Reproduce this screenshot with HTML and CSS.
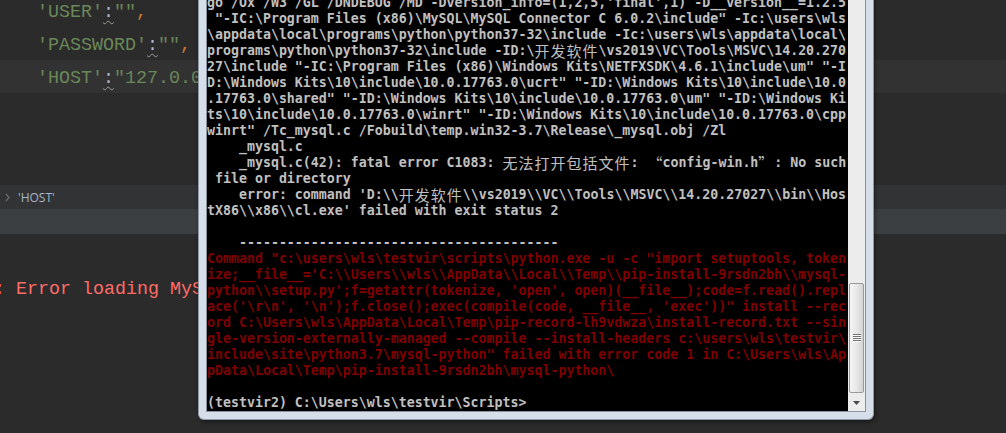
FILE: index.html
```html
<!DOCTYPE html>
<html lang="zh-CN">
<head>
  <meta charset="UTF-8" />
  <title>pip install mysql-python</title>
  <link rel="stylesheet" href="styles.css">
</head>
<body>
<div class="ide">
  <div class="editor">
    <div class="code">
      <div class="row">'USER'<span class="warn">:</span>""<span class="comma">,</span></div>
      <div class="row">'PASSWORD'<span class="warn">:</span>""<span class="comma">,</span></div>
      <div class="row current">'HOST'<span class="warn">:</span>"127.0.0.1"<span class="comma">,</span></div>
    </div>
  </div>
  <div class="crumbs">
    <svg width="5" height="9" viewBox="0 0 5 9"><polyline points="1,1 4,4.5 1,8" fill="none" stroke="#6b6e70" stroke-width="1.2"/></svg>
    <span>'HOST'</span>
  </div>
  <div class="toolhead"></div>
  <div class="output">: Error loading MySQLdb module.</div>
</div>

<!-- console window, lies over the editor -->
<div class="window">
  <div class="console">
    <div class="screen">
      <div class="ln">go /Ox /W3 /GL /DNDEBUG /MD -Dversion_info=(1,2,5,'final',1) -D__version__=1.2.5</div>
      <div class="ln"> "-IC:\Program Files (x86)\MySQL\MySQL Connector C 6.0.2\include" -Ic:\users\wls</div>
      <div class="ln">\appdata\local\programs\python\python37-32\include -Ic:\users\wls\appdata\local\</div>
      <div class="ln">programs\python\python37-32\include -ID:\<span class="cjk">开发软件</span>\vs2019\VC\Tools\MSVC\14.20.270</div>
      <div class="ln">27\include "-IC:\Program Files (x86)\Windows Kits\NETFXSDK\4.6.1\include\um" "-I</div>
      <div class="ln">D:\Windows Kits\10\include\10.0.17763.0\ucrt" "-ID:\Windows Kits\10\include\10.0</div>
      <div class="ln">.17763.0\shared" "-ID:\Windows Kits\10\include\10.0.17763.0\um" "-ID:\Windows Ki</div>
      <div class="ln">ts\10\include\10.0.17763.0\winrt" "-ID:\Windows Kits\10\include\10.0.17763.0\cpp</div>
      <div class="ln">winrt" /Tc_mysql.c /Fobuild\temp.win32-3.7\Release\_mysql.obj /Zl</div>
      <div class="ln">    _mysql.c</div>
      <div class="ln">    _mysql.c(42): fatal error C1083: <span class="cjk">无法打开包括文件</span>: <span class="wq l">“</span>config-win.h<span class="wq r">”</span>: No such</div>
      <div class="ln"> file or directory</div>
      <div class="ln">    error: command 'D:\\<span class="cjk">开发软件</span>\\vs2019\\VC\\Tools\\MSVC\\14.20.27027\\bin\\Hos</div>
      <div class="ln">tX86\\x86\\cl.exe' failed with exit status 2</div>
      <div class="ln"></div>
      <div class="ln">    ----------------------------------------</div>
      <div class="ln red">Command "c:\users\wls\testvir\scripts\python.exe -u -c "import setuptools, token</div>
      <div class="ln red">ize;__file__='C:\\Users\\wls\\AppData\\Local\\Temp\\pip-install-9rsdn2bh\\mysql-</div>
      <div class="ln red">python\\setup.py';f=getattr(tokenize, 'open', open)(__file__);code=f.read().repl</div>
      <div class="ln red">ace('\r\n', '\n');f.close();exec(compile(code, __file__, 'exec'))" install --rec</div>
      <div class="ln red">ord C:\Users\wls\AppData\Local\Temp\pip-record-lh9vdwza\install-record.txt --sin</div>
      <div class="ln red">gle-version-externally-managed --compile --install-headers c:\users\wls\testvir\</div>
      <div class="ln red">include\site\python3.7\mysql-python" failed with error code 1 in C:\Users\wls\Ap</div>
      <div class="ln red">pData\Local\Temp\pip-install-9rsdn2bh\mysql-python\</div>
      <div class="ln"></div>
      <div class="ln">(testvir2) C:\Users\wls\testvir\Scripts&gt;</div>
    </div>
    <div class="scroll">
      <div class="thumb">
        <svg width="8" height="9" viewBox="0 0 8 9">
          <path d="M0 0.5h8M0 2.5h8M0 4.5h8M0 6.5h8" stroke="#6f6f6f" stroke-width="1"/>
          <path d="M0 1.5h8M0 3.5h8M0 5.5h8M0 7.5h8" stroke="#ffffff" stroke-width="1"/>
        </svg>
      </div>
      <div class="arrow">
        <svg width="7" height="4" viewBox="0 0 7 4"><polygon points="0,0 7,0 3.5,4" fill="#4a4a4a"/></svg>
      </div>
    </div>
  </div>
</div>
</body>
</html>
```

FILE: styles.css
```css
body {
  margin: 0;
  width: 1006px;
  height: 433px;
  overflow: hidden;
  position: relative;
  background: #2b2b2b;
}

/* ---- editor behind the console ---- */
.editor {
  height: 185px;
  overflow: hidden;
}

.code {
  margin-top: -6px;
}

.row {
  height: 33px;
  box-sizing: border-box;
  padding: 4px 0 0 37px;
  font-family: 'Liberation Mono', monospace;
  font-size: 18.33px;
  line-height: 29px;
  white-space: pre;
  color: #6a8759;
}

.row.current {
  background: #323232;
}

.warn {
  color: #a9b7c6;
  text-decoration: underline wavy #9c9c9c;
  text-decoration-thickness: 1px;
  text-underline-offset: 3px;
}

.comma {
  color: #cc7832;
}

.crumbs {
  height: 24px;
  display: flex;
  align-items: center;
  gap: 8px;
  padding-left: 5px;
  background: #313335;
  font-family: 'Open Sans', sans-serif;
  font-size: 12px;
  color: #a9b7c6;
}

.toolhead {
  height: 25px;
  background: #3c3f41;
}

.output {
  margin-left: -6px;
  padding-top: 39px;
  font-family: 'Liberation Mono', monospace;
  font-size: 18.33px;
  line-height: 33px;
  white-space: pre;
  color: #ff6b68;
}

/* ---- console window ---- */
.window {
  position: absolute;
  left: 198px;
  top: -5px;
  width: 676px;
  box-sizing: border-box;
  padding: 0 8px 8px;
  background: #d5dee9;
  border: 1px solid #8f9aa8;
  border-top: none;
  border-radius: 0 0 6px 6px;
  box-shadow: 1px 2px 4px rgba(0,0,0,0.45);
}

.console {
  display: flex;
  box-shadow: 0 0 0 1px #8a939e;
}

.screen {
  width: 641px;
  height: 416px;
  overflow: hidden;
  background: #000;
  font-family: 'DejaVu Sans Mono', monospace;
  font-weight: bold;
  font-size: 13.288px;
  line-height: 16px;
  color: #c0c0c0;
}

.ln {
  height: 16px;
  white-space: pre;
}

.red {
  color: #800000;
}

.cjk {
  font-family: 'Noto Sans CJK SC', sans-serif;
  font-weight: normal;
  font-size: 15px;
  line-height: 16px;
  letter-spacing: 1px;
  vertical-align: top;
}

.wq {
  display: inline-block;
  width: 16px;
  height: 16px;
  font-family: 'Noto Sans CJK SC', sans-serif;
  font-weight: normal;
  font-size: 15px;
  line-height: 16px;
  vertical-align: top;
}

.wq.l { text-align: right; }
.wq.r { text-align: left; }

.scroll {
  width: 17px;
  display: flex;
  flex-direction: column;
  justify-content: flex-end;
  background: #ececec;
}

.thumb {
  height: 110px;
  margin: 0 1px 1px 1px;
  box-sizing: border-box;
  border: 1px solid #9a9a9a;
  border-radius: 2px;
  background: linear-gradient(to right, #f4f4f4, #e6e6e6 55%, #d3d3d3);
  display: flex;
  align-items: center;
  justify-content: center;
}

.arrow {
  height: 17px;
  display: flex;
  align-items: center;
  justify-content: center;
}
```
